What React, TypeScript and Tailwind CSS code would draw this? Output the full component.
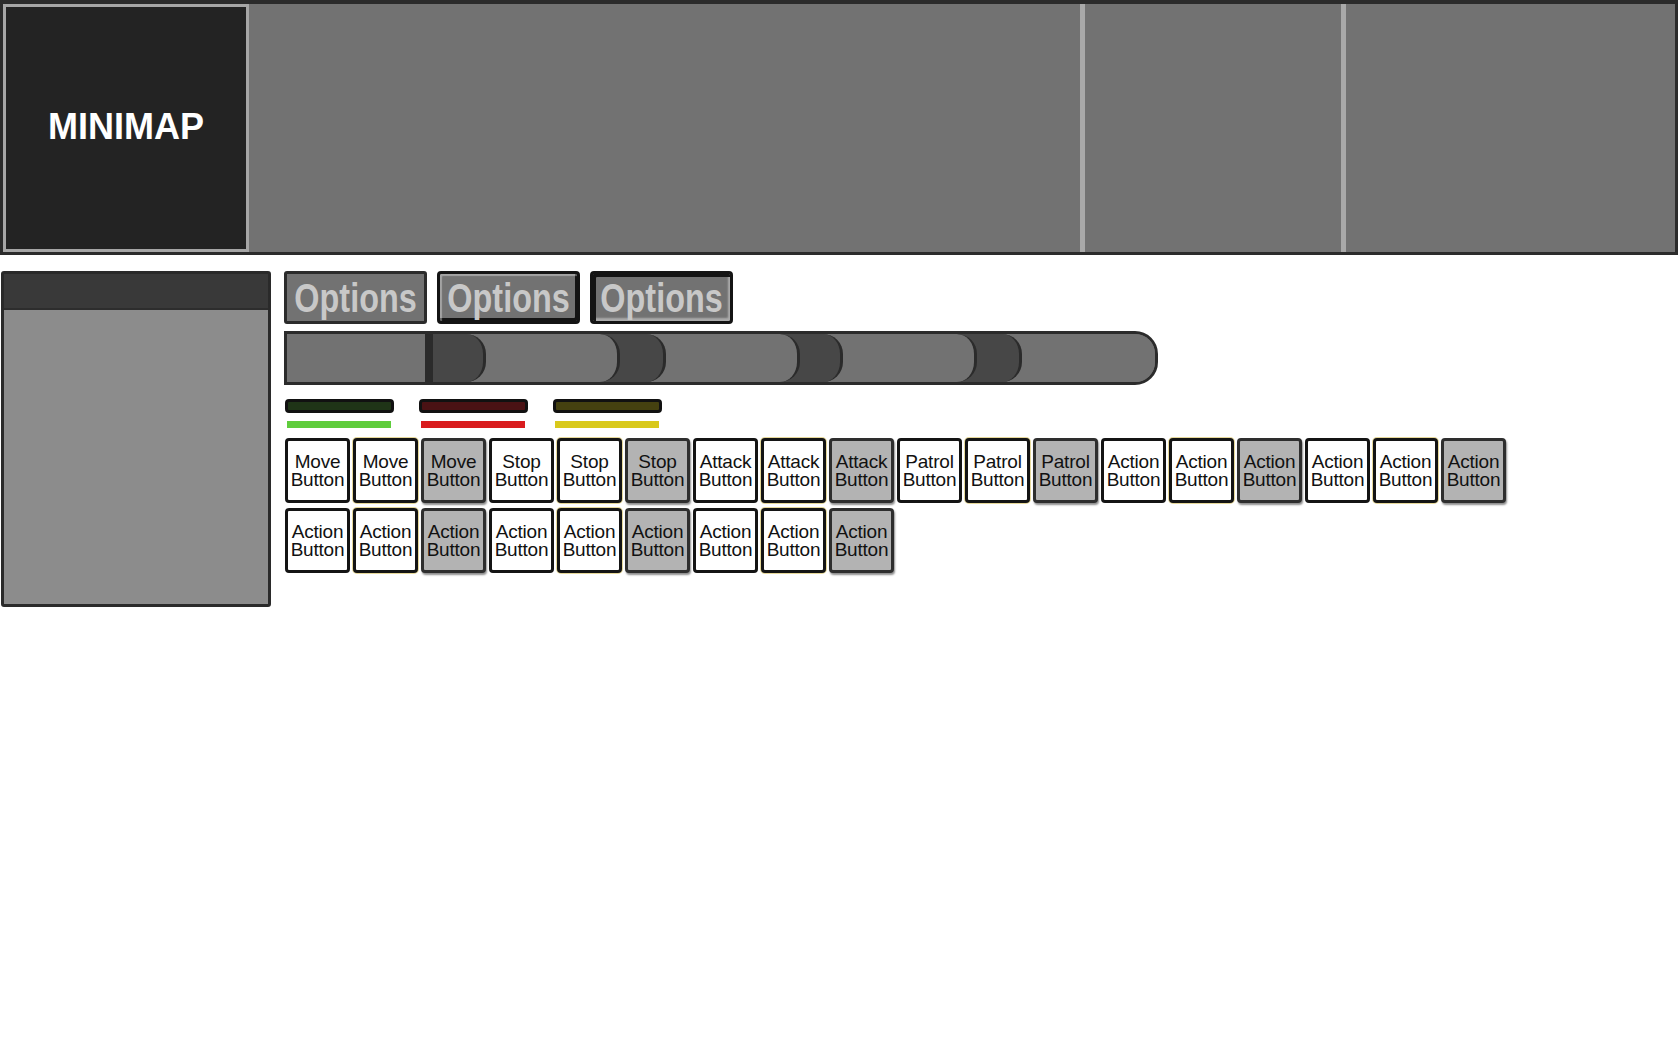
import React from "react";

type Variant = "plain" | "glow" | "gray";

function ActionBtn({ label, variant }: { label: string; variant: Variant }) {
  const base =
    "w-[65px] h-[65px] flex items-center justify-center text-center text-[19px] leading-[18px] tracking-[-0.2px] text-[#111] rounded-[4px] border-[3px]";
  const v =
    variant === "plain"
      ? "bg-white border-[#141414]"
      : variant === "glow"
      ? "bg-white border-[#141414] shadow-[0_0_0_1px_#e6d89a]"
      : "bg-[#b3b3b3] border-[#2e2e2e] shadow-[1px_2px_2px_rgba(0,0,0,0.45)]";
  return (
    <div className={`${base} ${v}`} style={{ fontFamily: '"Liberation Sans", Arial, sans-serif' }}>
      <div>
        {label}
        <br />
        Button
      </div>
    </div>
  );
}

function OptionsBtn({ kind }: { kind: 1 | 2 | 3 }) {
  const cls =
    kind === 1
      ? "border-[3px] border-[#2b2b2b] rounded-[3px]"
      : kind === 2
      ? "border-[3px] border-[#141414] rounded-[4px] shadow-[inset_2px_2px_1px_rgba(255,255,255,0.35),inset_-2px_-3px_0_#141414]"
      : "border-[3px] border-[#141414] rounded-[4px] shadow-[inset_3px_3px_0_#141414,inset_-2px_-3px_2px_rgba(255,255,255,0.4)]";
  return (
    <div
      className={`w-[143px] h-[53px] bg-[#727272] flex items-center justify-center overflow-hidden ${cls}`}
    >
      <span
        className="inline-block text-[40px] leading-[40px] font-bold text-[#c8c8c8] scale-x-[0.81]"
        style={{ fontFamily: '"Liberation Sans", Arial, sans-serif' }}
      >
        Options
      </span>
    </div>
  );
}

export default function App() {
  const row1: [string, Variant][] = [];
  const labels = ["Move", "Stop", "Attack", "Patrol", "Action", "Action"];
  const vs: Variant[] = ["plain", "glow", "gray"];
  labels.forEach((l) => vs.forEach((v) => row1.push([l, v])));
  const row2: [string, Variant][] = [];
  for (let i = 0; i < 3; i++) vs.forEach((v) => row2.push(["Action", v]));

  const light = "bg-[#727272]";
  const dark = "bg-[#474747]";
  const seg = "relative h-full shrink-0 rounded-r-[20px] border-r-[3px] border-[#2b2b2b]";

  return (
    <div
      className="w-[1678px] h-[1050px] bg-white overflow-hidden"
      style={{ fontFamily: '"Liberation Sans", Arial, sans-serif' }}
    >
      {/* Top bar */}
      <div className="h-[255px] border-[3px] border-t-4 border-[#2b2b2b] bg-[#727272] flex">
        <div className="w-[246px] h-full border-[3px] border-[#a6a6a6] bg-[#232323] flex items-center justify-center">
          <span className="text-white font-bold text-[36px] leading-none -mt-[2px]">MINIMAP</span>
        </div>
        <div className="w-[831px] h-full" />
        <div className="w-[5px] h-full bg-[#a9a9a9]" />
        <div className="w-[256px] h-full" />
        <div className="w-[5px] h-full bg-[#a9a9a9]" />
        <div className="flex-1 h-full" />
      </div>

      {/* Lower area */}
      <div className="flex mt-[16px]">
        <div className="ml-px w-[270px] h-[336px] rounded-[3px] border-[3px] border-[#2a2a2a] bg-[#8c8c8c] flex flex-col overflow-hidden">
          <div className="h-[36px] bg-[#393939] border-b-2 border-[#2d2d2d]" />
        </div>

        <div className="ml-[13px] flex flex-col">
          <div className="flex gap-[10px]">
            <OptionsBtn kind={1} />
            <OptionsBtn kind={2} />
            <OptionsBtn kind={3} />
          </div>

          {/* segmented bar */}
          <div className="mt-[7px] w-[874px] h-[54px] border-[3px] border-[#2b2b2b] rounded-r-[23px] bg-[#727272] flex overflow-hidden">
            <div className={`relative h-full shrink-0 w-[146px] border-r-[8px] border-[#2b2b2b] z-[9] ${light}`} />
            <div className={`${seg} w-[53px] z-[8] ${dark}`} />
            <div className={`${seg} -ml-[22px] w-[156px] z-[7] ${light}`} />
            <div className={`${seg} -ml-[22px] w-[68px] z-[6] ${dark}`} />
            <div className={`${seg} -ml-[22px] w-[156px] z-[5] ${light}`} />
            <div className={`${seg} -ml-[22px] w-[65px] z-[4] ${dark}`} />
            <div className={`${seg} -ml-[22px] w-[156px] z-[3] ${light}`} />
            <div className={`${seg} -ml-[22px] w-[67px] z-[2] ${dark}`} />
            <div className={`relative h-full flex-1 -ml-[22px] z-[1] ${light}`} />
          </div>

          {/* health bars */}
          <div className="mt-[14px] ml-px flex gap-[25px]">
            {[
              ["bg-[#1f3417]", "bg-[#5fcd3c]"],
              ["bg-[#4a1214]", "bg-[#d91c1e]"],
              ["bg-[#454110]", "bg-[#d9c91c]"],
            ].map(([fill, line], i) => (
              <div key={i} className="flex flex-col">
                <div className={`w-[109px] h-[14px] rounded-[4px] border-[3px] border-[#111] ${fill}`} />
                <div className={`mt-[8px] ml-[2px] w-[104px] h-[7px] ${line}`} />
              </div>
            ))}
          </div>

          {/* action buttons */}
          <div className="mt-[10px] ml-px flex flex-col gap-[5px]">
            <div className="flex gap-[3px]">
              {row1.map(([l, v], i) => (
                <ActionBtn key={i} label={l} variant={v} />
              ))}
            </div>
            <div className="flex gap-[3px]">
              {row2.map(([l, v], i) => (
                <ActionBtn key={i} label={l} variant={v} />
              ))}
            </div>
          </div>
        </div>
      </div>
    </div>
  );
}
